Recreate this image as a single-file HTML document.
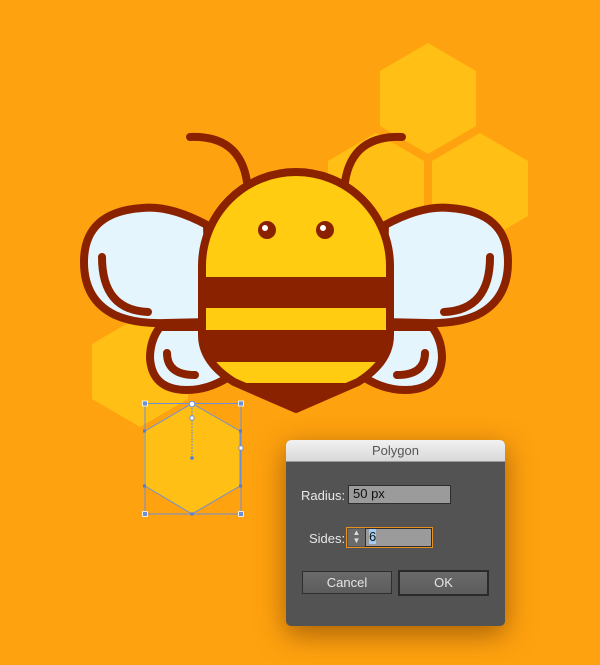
<!DOCTYPE html>
<html><head><meta charset="utf-8"><style>
html,body{margin:0;padding:0;}
body{width:600px;height:665px;background:#FFA20F;position:relative;overflow:hidden;font-family:"Liberation Sans",sans-serif;}
svg{position:absolute;left:0;top:0;}
.dlg{position:absolute;left:286px;top:440px;width:219px;height:186px;background:#535353;border-radius:5px;box-shadow:0 8px 28px rgba(90,40,0,0.55);overflow:hidden;}
.tb{height:21px;background:linear-gradient(#f2f2f2,#d8d8d8);border-bottom:1px solid #9a9a9a;text-align:center;font-size:13px;line-height:22px;color:#555;}
.lbl{position:absolute;color:#e8e8e8;font-size:13px;}
.fld{position:absolute;background:#9b9b9b;border:1px solid #2e2e2e;font-size:13px;color:#111;box-sizing:border-box;line-height:16px;padding-left:4px;}
.btn{position:absolute;background:linear-gradient(#6a6a6a,#5c5c5c);border:1px solid #2e2e2e;box-sizing:border-box;color:#e6e6e6;font-size:13px;text-align:center;}
</style></head><body>
<svg width="600" height="665" viewBox="0 0 600 665">
<g fill="#FFBF14">
<polygon points="428,43 476,71 476,126 428,154 380,126 380,71"/>
<polygon points="480,133 528,161 528,216 480,244 432,216 432,161"/>
<polygon points="376,133 424,161 424,216 376,244 328,216 328,161"/>
<polygon points="140,316 188,344 188,399 140,427 92,399 92,344"/>
<polygon points="192,403 240,431 240,486 192,514 144,486 144,431"/>
</g>
<g stroke="#8A2200" stroke-width="8" stroke-linecap="round" fill="none">
<path d="M190,137 Q240,135 247,182"/>
<path d="M402,137 Q352,135 345,182"/>
</g>
<g id="w" stroke="#8A2200" stroke-width="8" stroke-linecap="round" fill="#E5F5FD">
<path d="M160,327 Q150,340 150,358 Q152,390 187,390 Q212,390 236,372 L215,327 Z"/>
<path d="M207,225 Q170,205 142,208 Q84,212 84,262 Q84,300 115,315 Q135,324 165,323 L210,322 Z"/>
<path d="M102,257 Q102,310 148,312" fill="none"/>
<path d="M167,353 Q167,375 195,375" fill="none"/>
</g>
<use href="#w" transform="translate(592,0) scale(-1,1)"/>
<defs><clipPath id="b"><path d="M202,266 A94,94 0 0 1 390,266 L390,335 Q390,362 358,382 L296,409 L234,382 Q202,362 202,335 Z"/></clipPath></defs>
<path d="M202,266 A94,94 0 0 1 390,266 L390,335 Q390,362 358,382 L296,409 L234,382 Q202,362 202,335 Z" fill="#FFCC11" stroke="#8A2200" stroke-width="8" stroke-linejoin="round"/>
<g clip-path="url(#b)" fill="#8A2200">
<rect x="190" y="277" width="212" height="31"/>
<rect x="190" y="330" width="212" height="32"/>
<rect x="190" y="383" width="212" height="40"/>
</g>
<circle cx="267" cy="230" r="9" fill="#8A2200"/><circle cx="265" cy="228" r="3" fill="#fff"/>
<circle cx="325" cy="230" r="9" fill="#8A2200"/><circle cx="323" cy="228" r="3" fill="#fff"/>
<g stroke="#6C8FD8" stroke-width="1" fill="none">
<rect x="145" y="403.5" width="96" height="110.5"/>
<polygon points="192,403.5 240,431 240,486 192,514 145,486 145,431"/>
<line x1="192" y1="408" x2="192" y2="458" stroke-dasharray="2,1"/>
</g>
<g fill="#6C8FD8" stroke="#fff" stroke-width="0.8">
<rect x="142.5" y="401" width="5" height="5"/><rect x="238.5" y="401" width="5" height="5"/>
<rect x="142.5" y="511.5" width="5" height="5"/><rect x="238.5" y="511.5" width="5" height="5"/>
</g>
<g fill="#4F7BE0"><rect x="143" y="429.5" width="3" height="3"/><rect x="239" y="429.5" width="3" height="3"/><rect x="143" y="484.5" width="3" height="3"/><rect x="239" y="484.5" width="3" height="3"/><rect x="190.5" y="512.5" width="3" height="3"/><circle cx="192" cy="458" r="1.8"/></g>
<circle cx="192" cy="404" r="2.8" fill="#fff" stroke="#6C8FD8"/>
<circle cx="192" cy="418" r="2.2" fill="#fff" stroke="#6C8FD8"/>
<circle cx="241" cy="448" r="2.2" fill="#fff" stroke="#6C8FD8"/>
</svg>
<div class="dlg">
<div class="tb">Polygon</div>
<div class="lbl" style="left:15px;top:48px;">Radius:</div>
<div class="fld" style="left:62px;top:45px;width:103px;height:19px;">50 px</div>
<div class="lbl" style="left:23px;top:91px;">Sides:</div>
<div style="position:absolute;left:60px;top:87px;width:87px;height:21px;border:1px solid #E89020;box-sizing:border-box;">
<div style="position:absolute;left:1px;top:1px;width:17px;height:17px;background:#6b6b6b;border-right:1px solid #333;color:#ddd;font-size:8px;line-height:8px;text-align:center;">▲<br>▼</div>
<div class="fld" style="left:18px;top:0px;width:67px;height:19px;border:1px solid #2e2e2e;padding-left:3px;"><span style="background:#9fcdf5;">6</span></div>
</div>
<div class="btn" style="left:16px;top:131px;width:90px;height:23px;line-height:21px;">Cancel</div>
<div class="btn" style="left:112px;top:130px;width:91px;height:26px;line-height:22px;border:2px solid #2a2a2a;">OK</div>
</div>
</body></html>
